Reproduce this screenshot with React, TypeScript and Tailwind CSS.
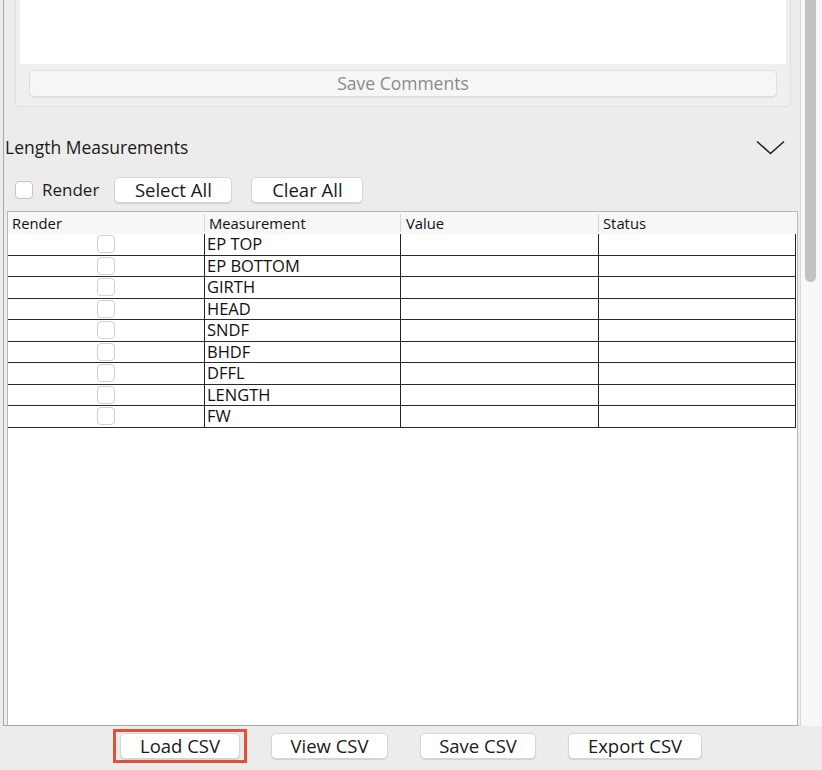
import React from "react";

const rows = ["EP TOP", "EP BOTTOM", "GIRTH", "HEAD", "SNDF", "BHDF", "DFFL", "LENGTH", "FW"];

function Btn({ children, className = "" }: { children: React.ReactNode; className?: string }) {
  return (
    <div
      className={
        "flex items-center justify-center h-[26px] rounded-[5px] bg-white border border-[#d6d6d6] shadow-[0_1px_1px_rgba(0,0,0,0.12)] text-[18.5px] text-[#1a1a1a] " +
        className
      }
    >
      {children}
    </div>
  );
}

export default function App() {
  return (
    <div
      className="w-[822px] h-[770px] bg-[#ececec] flex flex-col overflow-hidden"
      style={{ fontFamily: '"Open Sans", "Noto Sans", sans-serif' }}
    >
      <div className="flex h-[726px]">
        {/* main panel */}
        <div className="w-[796px] ml-[3px] border-l border-b border-[#a8a8a8] flex flex-col">
          {/* comments panel */}
          <div className="ml-[11px] w-[776px] h-[107px] bg-[#efefef] border-x border-b border-[#e0e0e0] rounded-b-[4px] flex flex-col">
            <div className="mx-[4px] h-[64px] bg-white" />
            <div className="mx-[13px] mt-[6px] h-[27px] rounded-[5px] bg-[#f6f6f6] border border-[#dedede] shadow-[0_1px_1px_rgba(0,0,0,0.06)] flex items-center justify-center text-[17.5px] text-[#8a8a8a]">
              Save Comments
            </div>
          </div>
          {/* heading */}
          <div className="flex items-center justify-between h-[64px] pl-[1px] pr-[14px] pt-[16px]">
            <span className="text-[17.5px] text-[#1a1a1a]">Length Measurements</span>
            <svg width="29" height="15" viewBox="0 0 29 15" fill="none">
              <path d="M1 1.5 L14.5 13.5 L28 1.5" stroke="#222" strokeWidth="1.6" />
            </svg>
          </div>
          {/* controls */}
          <div className="flex items-center h-[38px] pl-[11px]">
            <div className="w-[18px] h-[18px] rounded-[4px] bg-white border border-[#c4c4c4]" />
            <span className="ml-[9px] text-[17px] text-[#1a1a1a]">Render</span>
            <Btn className="ml-[15px] w-[118px]">Select All</Btn>
            <Btn className="ml-[19px] w-[112px]">Clear All</Btn>
          </div>
          {/* table */}
          <div className="mt-[2px] ml-[3px] w-[791px] flex-1 bg-white border border-[#b8b8b8] border-b-0 flex flex-col text-[#111]">
            <div className="flex h-[22px] bg-[#f7f7f7] items-center text-[14.8px]">
              <div className="w-[196px] pl-[4px]">Render</div>
              <div className="w-[196px] pl-[4px] border-l border-[#d6d6d6] h-[18px] leading-[18px]">Measurement</div>
              <div className="w-[198px] pl-[5px] border-l border-[#d6d6d6] h-[18px] leading-[18px]">Value</div>
              <div className="w-[197px] pl-[4px] border-l border-[#d6d6d6] h-[18px] leading-[18px]">Status</div>
            </div>
            {rows.map((r) => (
              <div key={r} className="flex h-[21.5px] w-[788px] border-b-[1.5px] border-[#2a2a2a]">
                <div className="w-[196px] flex justify-center items-center">
                  <div className="w-[18px] h-[18px] rounded-[4px] border border-[#d0d0d0] bg-white" />
                </div>
                <div className="w-[196px] border-l-[1.5px] border-[#222] pl-[2px] flex items-center leading-none text-[16.5px]">{r}</div>
                <div className="w-[198px] border-l-[1.5px] border-[#222]" />
                <div className="w-[198px] border-x-[1.5px] border-[#222]" />
              </div>
            ))}
          </div>
        </div>
        {/* scrollbar */}
        <div className="ml-[1px] w-[22px] bg-[#f7f7f7] border-l border-[#d8d8d8] flex flex-col">
          <div className="ml-[4px] w-[11px] h-[282px] bg-[#c2c2c2] rounded-b-full" />
        </div>
      </div>
      {/* bottom bar */}
      <div className="flex items-center h-[44px] pb-[4px]">
        <div className="ml-[113px] p-[1px] border-[3px] border-[#e2503b] w-[134px] h-[34px] flex items-center justify-center">
          <Btn className="w-[120px]">Load CSV</Btn>
        </div>
        <Btn className="ml-[24px] w-[117px]">View CSV</Btn>
        <Btn className="ml-[32px] w-[116px]">Save CSV</Btn>
        <Btn className="ml-[32px] w-[134px]">Export CSV</Btn>
      </div>
    </div>
  );
}
